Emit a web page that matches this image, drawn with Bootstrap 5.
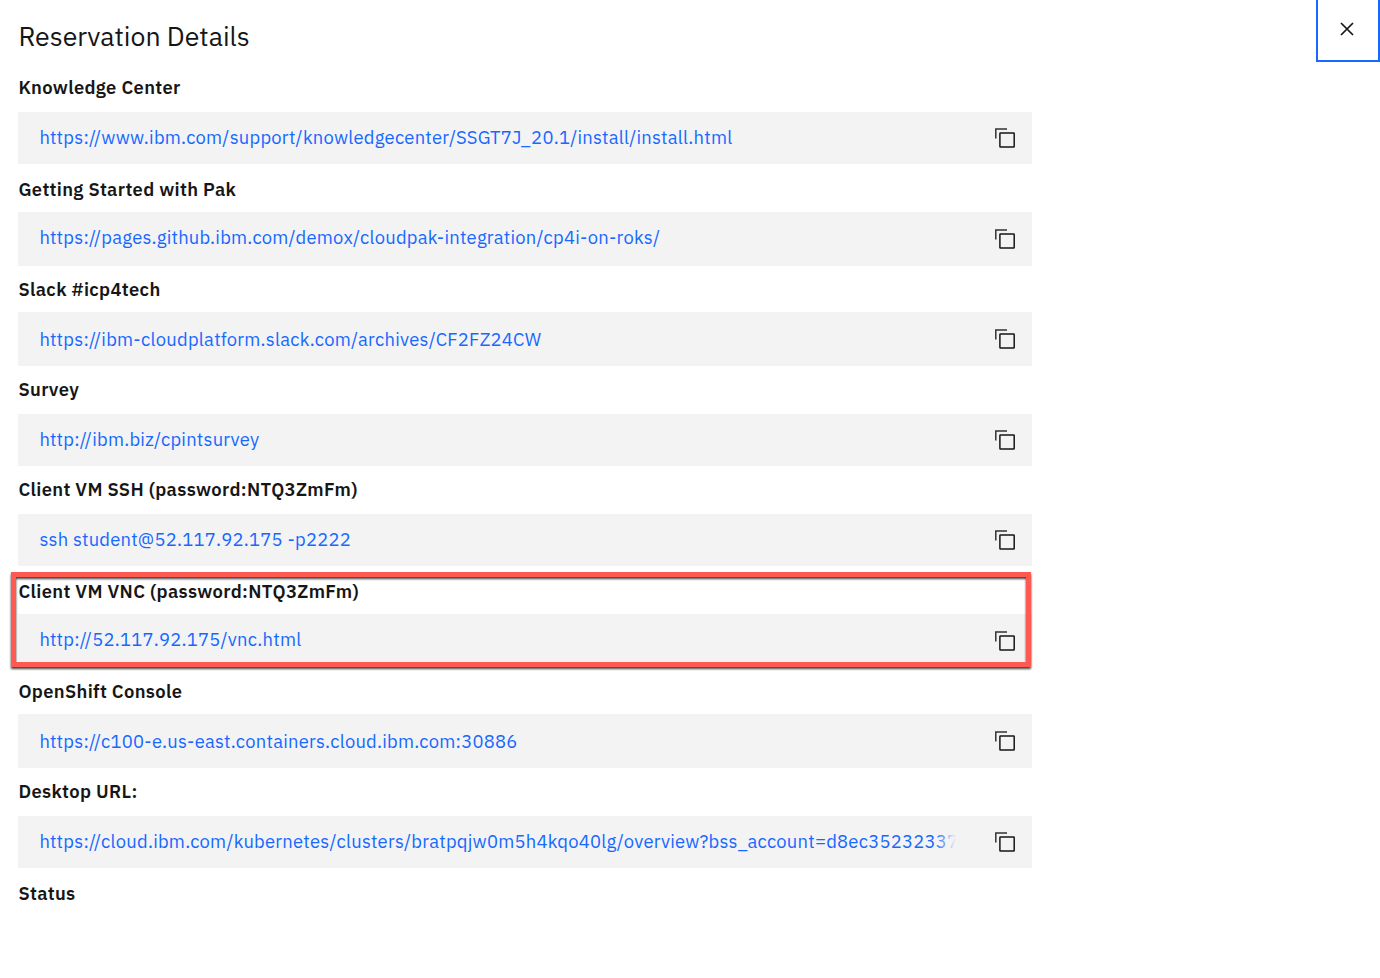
<!DOCTYPE html>
<html lang="en">
<head>
<meta charset="utf-8">
<meta name="viewport" content="width=device-width, initial-scale=1">
<title>Reservation Details</title>
<link href="https://cdn.jsdelivr.net/npm/bootstrap@5.3.0/dist/css/bootstrap.min.css" rel="stylesheet">
<style>
  body { font-family: "IBM Plex Sans", Roboto, sans-serif; color: #161616; background: #fff; overflow: hidden; }
  .panel-title { font-size: 26.66px; line-height: 34px; font-weight: 400; padding: 19px 0 0 18.4px; height: 64px; }
  .details { width: 1014px; margin-left: 18px; }
  .field { --gap: 48px; --drop: 0px; --bar: 52px; --nudge: 0px; --icon: 0px; }
  .field-label { height: var(--gap); font-size: 18.4px; line-height: 24px; font-weight: 600; padding: calc(11px + var(--drop)) 0 0 .4px; letter-spacing: .345px; white-space: nowrap; }
  .snippet { height: var(--bar); background: #f3f3f3; padding-left: 21px; }
  .snippet-text { width: 917px; line-height: 24px; padding-top: calc(13px + var(--nudge)); padding-left: .4px; overflow: hidden; white-space: nowrap; }
  .snippet-text a { color: #1668ff; font-size: 18.4px; letter-spacing: .235px; }
  .fade-end::after { content: ""; position: absolute; right: 0; top: 0; width: 21px; height: 100%; background: linear-gradient(90deg, rgba(243,243,243,0), #f3f3f3); }
  .copy { margin: calc(17px + var(--icon)) 17px 0 auto; width: 20px; height: 20px; }
  .copy svg, .close-btn svg { display: block; }
  .close-btn { width: 64px; height: 62px; border: 2px solid #1668ff; border-top: 0; }
  .f1 { --icon: -1px; }
  .f2 { --bar: 54px; --drop: 2px; }
  .f3 { --gap: 46px; --bar: 54px; --nudge: 2px; }
  .f4 { --icon: -1px; }
  .f5 { --icon: -1px; }
  .f6 { --drop: 2px; }
  .f7 { --bar: 54px; --drop: 2px; --nudge: 2px; }
  .f8 { --icon: -1px; }
  .f9 { --drop: 2px; }
  .highlight { left: -7px; top: 6px; width: 1020px; height: 95px; border: 5px solid #ff5a52; filter: drop-shadow(0 2px 1.3px rgba(0,0,0,.75)); pointer-events: none; }
</style>
</head>
<body>
<svg class="d-none" aria-hidden="true">
  <symbol id="copy-icon" viewBox="0 0 20 20">
    <path d="M.8 10.5V1H12" fill="none" stroke="#333" stroke-width="1.5"/>
    <rect x="4.9" y="4.9" width="14.3" height="14.2" rx=".6" fill="none" stroke="#161616" stroke-width="1.5"/>
  </symbol>
</svg>
<main class="d-flex justify-content-between align-items-start">
  <div>
    <h1 class="panel-title m-0">Reservation Details</h1>
    <div class="details">
      <section class="field f1">
        <div class="field-label">Knowledge Center</div>
        <div class="snippet d-flex">
          <div class="snippet-text"><a class="text-decoration-none" href="#">https://www.ibm.com/support/knowledgecenter/SSGT7J_20.1/install/install.html</a></div>
          <button class="copy btn p-0 border-0" aria-label="Copy"><svg width="20" height="20"><use href="#copy-icon"/></svg></button>
        </div>
      </section>
      <section class="field f2">
        <div class="field-label">Getting Started with Pak</div>
        <div class="snippet d-flex">
          <div class="snippet-text"><a class="text-decoration-none" href="#">https://pages.github.ibm.com/demox/cloudpak-integration/cp4i-on-roks/</a></div>
          <button class="copy btn p-0 border-0" aria-label="Copy"><svg width="20" height="20"><use href="#copy-icon"/></svg></button>
        </div>
      </section>
      <section class="field f3">
        <div class="field-label">Slack #icp4tech</div>
        <div class="snippet d-flex">
          <div class="snippet-text"><a class="text-decoration-none" href="#">https://ibm-cloudplatform.slack.com/archives/CF2FZ24CW</a></div>
          <button class="copy btn p-0 border-0" aria-label="Copy"><svg width="20" height="20"><use href="#copy-icon"/></svg></button>
        </div>
      </section>
      <section class="field f4">
        <div class="field-label">Survey</div>
        <div class="snippet d-flex">
          <div class="snippet-text"><a class="text-decoration-none" href="#">http://ibm.biz/cpintsurvey</a></div>
          <button class="copy btn p-0 border-0" aria-label="Copy"><svg width="20" height="20"><use href="#copy-icon"/></svg></button>
        </div>
      </section>
      <section class="field f5">
        <div class="field-label">Client VM SSH (password:NTQ3ZmFm)</div>
        <div class="snippet d-flex">
          <div class="snippet-text"><a class="text-decoration-none" href="#">ssh student@52.117.92.175 -p2222</a></div>
          <button class="copy btn p-0 border-0" aria-label="Copy"><svg width="20" height="20"><use href="#copy-icon"/></svg></button>
        </div>
      </section>
      <section class="field f6 position-relative">
        <div class="field-label">Client VM VNC (password:NTQ3ZmFm)</div>
        <div class="snippet d-flex">
          <div class="snippet-text"><a class="text-decoration-none" href="#">http://52.117.92.175/vnc.html</a></div>
          <button class="copy btn p-0 border-0" aria-label="Copy"><svg width="20" height="20"><use href="#copy-icon"/></svg></button>
        </div>
        <div class="highlight position-absolute"></div>
      </section>
      <section class="field f7">
        <div class="field-label">OpenShift Console</div>
        <div class="snippet d-flex">
          <div class="snippet-text"><a class="text-decoration-none" href="#">https://c100-e.us-east.containers.cloud.ibm.com:30886</a></div>
          <button class="copy btn p-0 border-0" aria-label="Copy"><svg width="20" height="20"><use href="#copy-icon"/></svg></button>
        </div>
      </section>
      <section class="field f8">
        <div class="field-label">Desktop URL:</div>
        <div class="snippet d-flex">
          <div class="snippet-text fade-end position-relative"><a class="text-decoration-none" href="#">https://cloud.ibm.com/kubernetes/clusters/bratpqjw0m5h4kqo40lg/overview?bss_account=d8ec35232337</a></div>
          <button class="copy btn p-0 border-0" aria-label="Copy"><svg width="20" height="20"><use href="#copy-icon"/></svg></button>
        </div>
      </section>
      <section class="field f9">
        <div class="field-label">Status</div>
      </section>
    </div>
  </div>
  <button class="close-btn btn rounded-0 p-0 d-flex justify-content-center" aria-label="Close">
    <svg class="mt-3" width="26" height="26" viewBox="0 0 26 26"><path d="M6 7l12 12M18 7L6 19" fill="none" stroke="#161616" stroke-width="1.7"/></svg>
  </button>
</main>
<script src="https://cdn.jsdelivr.net/npm/bootstrap@5.3.0/dist/js/bootstrap.bundle.min.js"></script>
</body>
</html>
